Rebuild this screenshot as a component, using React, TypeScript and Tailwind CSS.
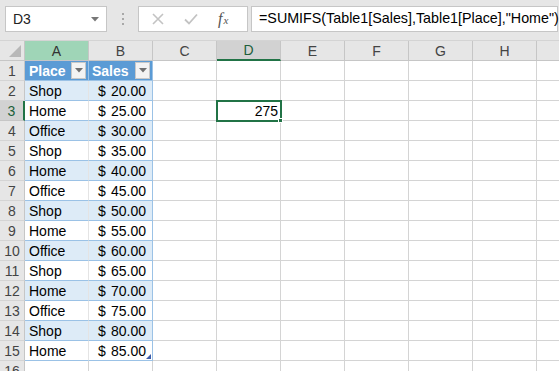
import React from "react";

const cols = ["A", "B", "C", "D", "E", "F", "G", "H", ""];
const data: [string, string][] = [
  ["Shop", "20.00"],
  ["Home", "25.00"],
  ["Office", "30.00"],
  ["Shop", "35.00"],
  ["Home", "40.00"],
  ["Office", "45.00"],
  ["Shop", "50.00"],
  ["Home", "55.00"],
  ["Office", "60.00"],
  ["Shop", "65.00"],
  ["Home", "70.00"],
  ["Office", "75.00"],
  ["Shop", "80.00"],
  ["Home", "85.00"],
];

function FilterBtn() {
  return (
    <div className="absolute right-[2px] top-[1px] w-[15px] h-[17px] bg-[#f3f3f3] border border-[#c8c8c8] flex items-center justify-center">
      <svg width="8" height="5" viewBox="0 0 8 5">
        <path d="M0 0 L8 0 L4 4.5 Z" fill="#707070" />
      </svg>
    </div>
  );
}

export default function App() {
  const font = { fontFamily: '"Liberation Sans", Arial, sans-serif' };
  const gridCols = "grid grid-cols-[25px_64px_64px_64px_64px_64px_64px_64px_64px_64px]";
  const rows = [] as React.ReactNode[];
  for (let r = 1; r <= 16; r++) {
    const isTable = r <= 15;
    const band = r >= 2 && r <= 15 && r % 2 === 0;
    const cells: React.ReactNode[] = [];
    cells.push(
      <div
        key="h"
        className={
          r === 3
            ? "h-[20px] bg-[#d2d2d2] border-r-2 border-r-[#217346] border-b border-b-[#c6c6c6] flex items-center justify-center pt-[1px] text-[14px] text-[#1d5f3a]"
            : "h-[20px] bg-[#e6e6e6] border-r border-r-[#c6c6c6] border-b border-b-[#d4d4d4] flex items-center justify-center pt-[1px] text-[14px] text-[#444]"
        }
      >
        {r}
      </div>
    );
    if (isTable) {
      if (r === 1) {
        cells.push(
          <div key="a" className="relative h-[20px] bg-[#5b9bd5] border-r border-r-[#9bc2e6] border-b border-b-[#9bc2e6] pl-[4px] pt-[1px] flex items-center text-[14px] font-bold text-white">
            Place
            <FilterBtn />
          </div>
        );
        cells.push(
          <div key="b" className="relative h-[20px] bg-[#5b9bd5] border-r border-r-[#9bc2e6] border-b border-b-[#9bc2e6] pl-[3px] pt-[1px] flex items-center text-[14px] font-bold text-white">
            Sales
            <FilterBtn />
          </div>
        );
      } else {
        const [p, v] = data[r - 2];
        cells.push(
          <div key="a" className={`h-[20px] ${band ? "bg-[#ddebf7]" : "bg-white"} border-r border-r-[#e4e4e4] border-b border-b-[#9bc2e6] pl-[4px] pt-[1px] flex items-center text-[14px] text-black`}>
            {p}
          </div>
        );
        cells.push(
          <div key="b" className={`relative h-[20px] ${band ? "bg-[#ddebf7]" : "bg-white"} border-r border-r-[#9bc2e6] border-b border-b-[#9bc2e6] pl-[9px] pr-[6px] pt-[1px] flex items-center justify-between text-[14px] text-black`}>
            <span>$</span>
            <span>{v}</span>
            {r === 15 && (
              <svg className="absolute right-[1px] bottom-[1px]" width="5" height="5" viewBox="0 0 5 5">
                <path d="M5 0 L5 5 L0 5 Z" fill="#3b5ba8" />
              </svg>
            )}
          </div>
        );
      }
    } else {
      cells.push(<div key="a" className="h-[20px] border-r border-r-[#d4d4d4] border-b border-b-[#d4d4d4]" />);
      cells.push(<div key="b" className="h-[20px] border-r border-r-[#d4d4d4] border-b border-b-[#d4d4d4]" />);
    }
    for (let c = 2; c < 9; c++) {
      if (c === 3 && r === 3) {
        cells.push(
          <div key={c} className="relative h-[20px] border-b border-b-[#d4d4d4] border-r border-r-[#d4d4d4]">
            <div className="absolute left-[-1px] top-[-1px] w-[66px] h-[22px] border-2 border-[#217346] flex items-center justify-end pr-[2px] pt-[1px] text-[14px] text-black">
              275
            </div>
            <div className="absolute right-[-3px] bottom-[-3px] w-[5px] h-[5px] bg-[#217346] border border-white" />
          </div>
        );
      } else {
        cells.push(<div key={c} className="h-[20px] border-r border-r-[#d4d4d4] border-b border-b-[#d4d4d4]" />);
      }
    }
    rows.push(...cells);
  }

  return (
    <div className="w-[559px] h-[371px] overflow-hidden bg-white" style={font}>
      <div className="h-[41px] bg-[#e6e6e6] flex items-start pt-[6px] pl-[5px] border-b border-b-[#d4d4d4]">
        <div className="w-[102px] h-[26px] bg-white border border-[#c6c6c6] flex items-center justify-between pl-[7px] pr-[7px] text-[14px] text-[#222]">
          <span>D3</span>
          <svg width="8" height="5" viewBox="0 0 8 5">
            <path d="M0 0 L8 0 L4 4.5 Z" fill="#777" />
          </svg>
        </div>
        <div className="w-[31px] h-[26px] flex flex-col items-center justify-center gap-[3px]">
          <div className="w-[2px] h-[2px] bg-[#a8a8a8]" />
          <div className="w-[2px] h-[2px] bg-[#a8a8a8]" />
          <div className="w-[2px] h-[2px] bg-[#a8a8a8]" />
        </div>
        <div className="w-[110px] h-[26px] bg-white border border-[#c6c6c6] flex items-center">
          <svg className="ml-[13px]" width="12" height="12" viewBox="0 0 12 12">
            <path d="M1 1 L11 11 M11 1 L1 11" stroke="#c3c3c3" strokeWidth="1.6" />
          </svg>
          <svg className="ml-[20px]" width="14" height="12" viewBox="0 0 14 12">
            <path d="M1 6.5 L5 10.5 L13 1.5" stroke="#c3c3c3" strokeWidth="1.8" fill="none" />
          </svg>
          <span
            className="ml-[20px] text-[16px] italic text-[#555]"
            style={{ fontFamily: '"Liberation Serif", "Times New Roman", serif' }}
          >
            f<span className="text-[11px] ml-[1px]">x</span>
          </span>
        </div>
        <div className="ml-[3px] w-[307px] h-[26px] bg-white border border-[#c6c6c6] flex items-center pl-[7px] text-[14.3px] text-black whitespace-nowrap">
          =SUMIFS(Table1[Sales],Table1[Place],"Home")
        </div>
      </div>
      <div className={gridCols}>
        <div className="relative h-[20px] bg-[#e6e6e6] border-r border-r-[#c6c6c6] border-b border-b-[#c6c6c6]">
          <svg className="absolute right-[3px] bottom-[3px]" width="12" height="12" viewBox="0 0 12 12">
            <path d="M12 0 L12 12 L0 12 Z" fill="#b8b8b8" />
          </svg>
        </div>
        {cols.map((c, i) => {
          if (i === 0)
            return (
              <div key={i} className="h-[20px] bg-[#9fd5b7] border-r border-r-[#c6c6c6] border-b border-b-[#c6c6c6] flex items-center justify-center pt-[1px] text-[14px] text-[#333]">
                {c}
              </div>
            );
          if (i === 3)
            return (
              <div key={i} className="h-[20px] bg-[#d2d2d2] border-r border-r-[#c6c6c6] border-b-2 border-b-[#217346] flex items-center justify-center pt-[1px] text-[14px] text-[#1d5f3a]">
                {c}
              </div>
            );
          return (
            <div key={i} className="h-[20px] bg-[#e6e6e6] border-r border-r-[#c6c6c6] border-b border-b-[#c6c6c6] flex items-center justify-center pt-[1px] text-[14px] text-[#444]">
              {c}
            </div>
          );
        })}
      </div>
      <div className={gridCols}>{rows}</div>
    </div>
  );
}
